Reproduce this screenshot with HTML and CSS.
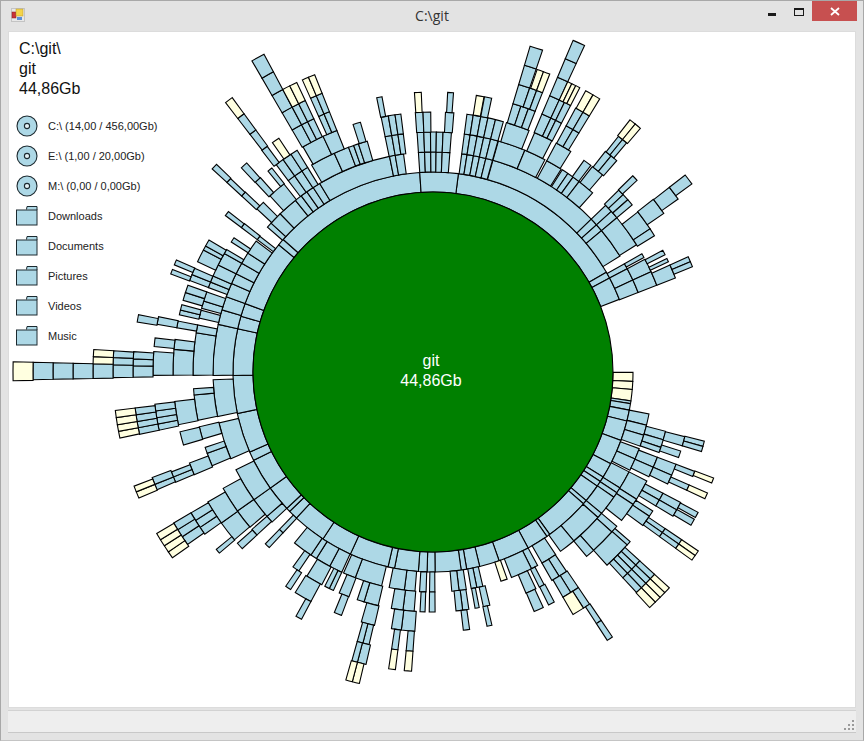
FILE: index.html
```html
<!DOCTYPE html>
<html lang="en">
<head>
    <meta charset="UTF-8">
    <title>C:\git</title>
    <link rel="stylesheet" href="styles.css">
</head>
<body>
    <div class="window">
        <div class="titlebar">
            <svg class="app-icon" width="14" height="14" viewBox="0 0 14 14">
                <rect x="0.5" y="0.5" width="13" height="13" fill="#e8e8e8" stroke="#c4c4c4"/>
                <rect x="1" y="4" width="4" height="6" fill="#c8323a" stroke="#8a2020" stroke-width="0.5"/>
                <rect x="5" y="1" width="7" height="7" fill="#f4d44a" stroke="#b8962a" stroke-width="0.5"/>
                <rect x="6" y="9" width="5" height="3" fill="#5c8fd6"/>
            </svg>
            <span class="title">C:\git</span>
            <div class="controls">
                <span class="btn-min"></span>
                <span class="btn-max"></span>
                <span class="btn-close">
                    <svg width="10" height="9" viewBox="0 0 10 9">
                        <path d="M1 1 L9 8 M9 1 L1 8" stroke="#fff" stroke-width="1.8" fill="none"/>
                    </svg>
                </span>
            </div>
        </div>

        <div class="panel">
            <svg id="sunburst" class="sunburst"></svg>

            <div class="info">
                <div>C:\git\</div>
                <div>git</div>
                <div>44,86Gb</div>
            </div>

            <ul class="places">
                <li><svg class="ico" viewBox="0 0 22 22"><use href="#disc"/></svg>C:\ (14,00 / 456,00Gb)</li>
                <li><svg class="ico" viewBox="0 0 22 22"><use href="#disc"/></svg>E:\ (1,00 / 20,00Gb)</li>
                <li><svg class="ico" viewBox="0 0 22 22"><use href="#disc"/></svg>M:\ (0,00 / 0,00Gb)</li>
                <li><svg class="ico" viewBox="0 0 22 22"><use href="#folder"/></svg>Downloads</li>
                <li><svg class="ico" viewBox="0 0 22 22"><use href="#folder"/></svg>Documents</li>
                <li><svg class="ico" viewBox="0 0 22 22"><use href="#folder"/></svg>Pictures</li>
                <li><svg class="ico" viewBox="0 0 22 22"><use href="#folder"/></svg>Videos</li>
                <li><svg class="ico" viewBox="0 0 22 22"><use href="#folder"/></svg>Music</li>
            </ul>
        </div>

        <div class="statusbar">
            <svg width="12" height="12" viewBox="0 0 12 12">
                <path d="M9 1h2v2H9zM5 5h2v2H5zM9 5h2v2H9zM1 9h2v2H1zM5 9h2v2H5zM9 9h2v2H9z" fill="#9a9a9a"/>
            </svg>
        </div>
    </div>

    <svg class="defs" width="0" height="0">
        <defs>
            <g id="disc">
                <circle cx="11" cy="11" r="10" fill="lightblue" stroke="#1c2a30" stroke-width="1.1"/>
                <circle cx="11" cy="11" r="2.6" fill="#e4f2f6" stroke="#1c2a30" stroke-width="1.1"/>
            </g>
            <g id="folder">
                <path d="M10.5 4.5 L11 1.5 H21 V5" fill="lightblue" stroke="#1c2a30"/>
                <rect x="0.5" y="5" width="20.5" height="15" fill="lightblue" stroke="#1c2a30"/>
            </g>
        </defs>
    </svg>

    <script src="sunburst.js"></script>
</body>
</html>
```

FILE: styles.css
```css
* {
    box-sizing: border-box;
}
body {
    margin: 0;
    background: #e3e3e3;
    font-family: "Liberation Sans", Arial, sans-serif;
}
.window {
    width: 864px;
    height: 741px;
    display: flex;
    flex-direction: column;
    border: 1px solid #a8a8a8;
    border-bottom-color: #c4c4c4;
    background: #e3e3e3;
}
.titlebar {
    height: 30px;
    flex: none;
    position: relative;
    display: flex;
    align-items: center;
    justify-content: center;
}
.app-icon {
    position: absolute;
    left: 10px;
    top: 7px;
}
.title {
    font-family: "Open Sans", sans-serif;
    font-size: 14px;
    color: #333;
    margin-bottom: 1px;
}
.controls {
    position: absolute;
    right: 6px;
    top: 0;
    display: flex;
}
.btn-min {
    width: 8px;
    height: 3px;
    background: #1a1a1a;
    margin: 12px 18px 0 0;
}
.btn-max {
    width: 10px;
    height: 8px;
    border: 1px solid #1a1a1a;
    border-top-width: 2px;
    margin: 7px 8px 0 0;
}
.btn-close {
    width: 45px;
    height: 20px;
    background: #c75050;
    display: flex;
    align-items: center;
    justify-content: center;
}
.panel {
    flex: 1;
    position: relative;
    margin: 0 7px 0 7px;
    border: 1px solid #dcdcdc;
    background: #fff;
    padding: 7px 0 0 9px;
    overflow: hidden;
}
.sunburst {
    position: absolute;
    left: 0;
    top: 0;
    width: 100%;
    height: 100%;
}
.cell {
    fill: lightblue;
    stroke: #000;
    stroke-width: 1.1;
}
.cell-file {
    fill: lightyellow;
}
.core {
    fill: green;
    stroke: #000;
    stroke-width: 1.1;
}
.core-label {
    fill: #fff;
    font-size: 16px;
    text-anchor: middle;
}
.info {
    position: relative;
    width: 110px;
    font-size: 16px;
    line-height: 20px;
    color: #111;
    margin-left: 1px;
}
.places {
    position: relative;
    width: 150px;
    list-style: none;
    margin: 12px 0 0 -2px;
    padding: 0;
}
.places li {
    height: 30px;
    display: flex;
    align-items: center;
    font-size: 11px;
    color: #222;
    white-space: nowrap;
}
.ico {
    width: 22px;
    height: 22px;
    flex: none;
    margin-right: 10px;
}
.statusbar {
    height: 23px;
    flex: none;
    margin: 2px 7px 7px 7px;
    background: #eeeeee;
    border-top: 1px solid #d2d2d2;
    border-bottom: 1px solid #c8c8c8;
    display: flex;
    justify-content: flex-end;
    align-items: flex-end;
    padding: 0 1px 1px 0;
}
.defs {
    position: absolute;
}
```

FILE: sunburst.js
```js
// sunburst of the folder tree: angles in degrees, clockwise from 12 o'clock
var CX = 424, CY = 340, R0 = 180, STEP = 20;
var Y = 1;

// [first ring, last ring, cell boundaries, is a file]
var cells = [
    // ring 1
    [1, 1, [7.3, 60.1, 62, 68.7]],
    [1, 1, [90.1, 92.7, 95, 98.3], Y],
    [1, 1, [98.3, 99.1, 101, 104.2, 110, 117.3, 121.7, 123.2, 124.8, 130, 131.2, 144.3, 145.3, 151.6, 160.7, 166.5, 170.3, 171.9, 179.4, 181.7, 184.2, 191.1, 193, 204.4, 213.4, 223.1, 225.8, 227, 234.5, 243.8, 246.4, 258, 269, 282.5, 286.2, 290, 309.5, 311.5, 356.2, 367.3]],

    // ring 2
    [2, 2, [15.8, 46, 48, 50, 58.2]],
    [2, 2, [60.5, 62, 65.3, 68.8]],
    [2, 2, [101, 104, 106.7, 109.7]],
    [2, 2, [110.4, 113.3, 116.5]],
    [2, 2, [117, 121.8, 123.3, 124.7, 130, 131.4, 140.2, 144.6]],
    [2, 2, [146.1, 150.3]],
    [2, 2, [151.6, 153.4, 159.1]],
    [2, 2, [160.3, 162], Y],
    [2, 2, [166.9, 168.5, 170]],
    [2, 2, [171.3, 173.2, 175.1]],
    [2, 2, [179.5, 180.9]],
    [2, 2, [181.8, 183.5]],
    [2, 2, [184.7, 187.5, 191.5]],
    [2, 2, [193.5, 200.7, 204]],
    [2, 2, [204.5, 208, 212, 213.7, 219]],
    [2, 2, [223, 224.3]],
    [2, 2, [227, 229, 234.5, 243.6]],
    [2, 2, [246.8, 256.6]],
    [2, 2, [258.3, 268]],
    [2, 2, [269.1, 282.5, 286.4, 290, 293.7, 296.5, 299.6, 302.7, 306.5]],
    [2, 2, [307, 308.1]],
    [2, 2, [311.2, 312.6, 316, 321.3, 323.2, 325, 327, 329, 348.6, 350.1, 352.3]],

    // ring 3
    [3, 3, [15.8, 22.5]],
    [3, 3, [22.5, 27.8]],
    [3, 3, [28.3, 32.3]],
    [3, 3, [32.6, 34.2, 35.7, 37.5, 41.7]],
    [3, 3, [46, 48, 50, 58]],
    [3, 3, [60.5, 61.5]],
    [3, 3, [62, 65.3, 68.8]],
    [3, 3, [104.3, 106.4, 108.3, 109.6]],
    [3, 3, [110.8, 113.4, 115.9]],
    [3, 3, [117, 122, 123.5, 128.2]],
    [3, 3, [130, 131.8, 138, 140.2]],
    [3, 3, [146.2, 148.3, 150.3]],
    [3, 3, [152.4, 153.7]],
    [3, 3, [154.6, 157.2]],
    [3, 3, [166.3, 167.9]],
    [3, 3, [168.9, 169.9]],
    [3, 3, [171.4, 172.9, 174.5]],
    [3, 3, [179.5, 180.9]],
    [3, 3, [181.9, 183.1]],
    [3, 3, [184.5, 187.2, 190]],
    [3, 3, [193.2, 196.7, 198.4]],
    [3, 3, [200.5, 203]],
    [3, 3, [204.5, 205.6, 206.8]],
    [3, 3, [207.6, 211.7]],
    [3, 3, [214, 215.7]],
    [3, 3, [223, 224.3]],
    [3, 3, [227.2, 229]],
    [3, 3, [229.7, 234.6, 241]],
    [3, 3, [247, 250.2, 251.7]],
    [3, 3, [253.8, 256.8]],
    [3, 3, [258.4, 264.5, 266]],
    [3, 3, [269.2, 279.4, 281.3]],
    [3, 3, [283, 284.9]],
    [3, 3, [285.4, 287.2, 289.5]],
    [3, 3, [290.6, 292, 293.6, 296.5, 299.6, 300.7]],
    [3, 3, [302.8, 304]],
    [3, 3, [307, 308.2]],
    [3, 3, [312.8, 315]],
    [3, 3, [317.2, 321.6]],
    [3, 3, [322.9, 324.8, 326.9, 328.5]],
    [3, 3, [329.6, 335.7, 339.4, 340.7, 341.9, 344.1]],
    [3, 3, [348.5, 350.1, 351.6, 352.9]],
    [2, 3, [356.2, 357.8, 359.4, 360.8, 362.4, 364.4]],

    // ring 4
    [4, 4, [16.4, 21.7]],
    [4, 4, [23, 27.2]],
    [4, 4, [28.3, 32]],
    [4, 4, [35.5, 37.4]],
    [4, 4, [37.8, 40.7]],
    [4, 4, [45.6, 47, 48.5, 50]],
    [4, 4, [52, 56.6, 58.4]],
    [4, 4, [62.1, 63.2]],
    [4, 4, [64.1, 64.9]],
    [4, 4, [65.7, 68.8]],
    [4, 4, [104.4, 106.5]],
    [4, 4, [107.7, 109.2]],
    [4, 4, [110.8, 113.4, 115.5]],
    [4, 4, [117.8, 119.5, 121]],
    [4, 4, [122.3, 123.7, 126.2]],
    [4, 4, [130.7, 131.7, 138]],
    [4, 4, [146, 148, 150]],
    [4, 4, [152.2, 153.6]],
    [4, 4, [154.9, 157.1]],
    [4, 4, [166.9, 168]],
    [4, 4, [171.9, 173.3]],
    [4, 4, [184, 187, 189.2]],
    [4, 4, [193, 196]],
    [4, 4, [200.6, 202.3]],
    [4, 4, [208, 212]],
    [4, 4, [213.2, 214.5]],
    [4, 4, [227.2, 228.8]],
    [4, 4, [229.8, 234.5, 240]],
    [4, 4, [246.7, 249.5]],
    [4, 4, [253.7, 256.7]],
    [4, 4, [258.3, 263.5]],
    [4, 4, [269.3, 275, 277.2]],
    [4, 4, [279.8, 281.3]],
    [4, 4, [282.7, 283.8, 285]],
    [4, 4, [286, 287.8, 289.5]],
    [4, 4, [290.6, 292, 293.5]],
    [4, 4, [295.1, 298, 299, 300.5]],
    [4, 4, [307, 308.1]],
    [4, 4, [312.6, 313.8]],
    [4, 4, [316.9, 318.4]],
    [4, 4, [320.6, 321.7]],
    [4, 4, [322.9, 324.8, 326.9, 328.5]],
    [4, 4, [330, 335, 338.3]],
    [4, 4, [342.1, 343.8]],
    [4, 4, [348.5, 350.1, 351.6, 352.9]],
    [4, 4, [356.1, 357.8, 359.5]],
    [4, 4, [362.75, 364.6]],
    [2, 4, [7.5, 8.9, 10.6, 12.2, 13.9, 15.7]],

    // ring 5
    [5, 5, [8.9, 10.5], Y],
    [5, 5, [10.6, 12.1]],
    [5, 5, [16.6, 18.3, 19.9, 21.4]],
    [5, 6, [22.9, 24.9, 26, 27.3]],
    [5, 6, [28.4, 30, 31.4]],
    [5, 5, [38, 39.5, 41]],
    [5, 5, [45.5, 46.8]],
    [5, 5, [51.9, 55.5]],
    [5, 5, [65.7, 66.8, 67.9]],
    [5, 5, [104.3, 105.4, 106.5]],
    [5, 5, [110.8, 111.9]],
    [5, 5, [113.8, 115]],
    [5, 5, [117.8, 119.5, 121]],
    [5, 6, [124, 125, 126]],
    [5, 6, [132.4, 133.6, 134.8, 136, 137.3]],
    [5, 5, [146, 147.5]],
    [5, 5, [147.5, 150], Y],
    [5, 5, [184.1, 185.5]],
    [5, 5, [187.2, 188.5]],
    [5, 5, [193.2, 194.5, 195.7]],
    [5, 5, [208, 209.3]],
    [5, 5, [229.7, 230.7]],
    [5, 5, [234.6, 236.3, 238, 239.8]],
    [5, 5, [246.8, 248, 249.1]],
    [5, 5, [258, 259.3, 260.6, 262, 263.4]],
    [5, 5, [269.3, 274.2]],
    [5, 5, [275.2, 277]],
    [5, 5, [279.8, 281.4]],
    [5, 5, [290.5, 291.5]],
    [5, 5, [292.5, 293.6]],
    [5, 5, [312.6, 313.7]],
    [5, 5, [316.8, 318.3]],
    [5, 5, [322.3, 323.7]],
    [5, 5, [325, 326.6], Y],
    [5, 5, [329.8, 332, 333.4, 334.8]],
    [5, 5, [335.9, 337.1, 338.3]],
    [5, 5, [348.4, 349.5]],
    [5, 5, [356.2, 357.6], Y],
    [5, 5, [363, 364.2]],

    // ring 6
    [6, 6, [16.6, 18.8, 20.2, 21.4]],
    [6, 6, [38.2, 39.2, 40.2]],
    [6, 6, [52, 54.8]],
    [6, 6, [110.7, 111.7], Y],
    [6, 6, [113.8, 115], Y],
    [6, 6, [117.9, 119]],
    [6, 6, [119.4, 120.7]],
    [6, 6, [145.9, 147]],
    [6, 6, [184.1, 185.5], Y],
    [6, 6, [187.2, 188.5], Y],
    [6, 6, [192.9, 194.6, 195.7]],
    [6, 6, [234.9, 236.7, 238.3, 239.8]],
    [6, 6, [246.9, 248, 249.4]],
    [6, 6, [258, 259.3, 260.5, 261.8, 263.1]],
    [6, 6, [269, 271.2, 272.5, 273.9]],
    [6, 6, [279.6, 281]],
    [6, 6, [312.6, 313.8]],
    [6, 7, [322.4, 323.8]],
    [6, 6, [329.8, 332, 333.4, 334.8]],
    [6, 6, [335.9, 337.1, 338.3]],

    // ring 7 and out
    [7, 8, [16.6, 18.8]],
    [7, 7, [19, 20.2, 21.4], Y],
    [7, 9, [22.9, 24.9]],
    [7, 7, [24.9, 25.7, 26.5, 27.3], Y],
    [7, 7, [28.5, 30, 31.4], Y],
    [7, 7, [38, 39.2, 40.4], Y],
    [7, 7, [52, 54]],
    [7, 7, [124, 125, 126], Y],
    [7, 7, [132.4, 133.6, 134.8, 136, 137.4], Y],
    [7, 7, [145.9, 147]],
    [7, 7, [193.3, 194.6, 195.8], Y],
    [7, 7, [234.5, 235.8, 237.1, 238.4, 239.7], Y],
    [7, 7, [246.8, 248, 249.1], Y],
    [7, 7, [258.1, 259.3, 260.5, 261.8, 263.1], Y],
    [7, 7, [269, 271.3, 272.6, 273.8]],
    [7, 9, [329.8, 332]],
    [7, 7, [332, 333.4, 334.8], Y],
    [7, 7, [335.9, 337.1, 338.3], Y],
    [8, 11, [268.9, 271.4]],
    [8, 8, [271.4, 272.6, 273.8], Y],
    [8, 8, [322.4, 323.8], Y],
    [12, 12, [268.8, 271.4], Y]
];

function pt(r, a) {
    var t = a * Math.PI / 180;
    return (CX + r * Math.sin(t)).toFixed(2) + ' ' + (CY - r * Math.cos(t)).toFixed(2);
}

function sector(ring, a0, a1) {
    var r1 = R0 + (ring - 1) * STEP, r2 = r1 + STEP;
    return 'M' + pt(r1, a0) +
        ' L' + pt(r2, a0) +
        ' A' + r2 + ' ' + r2 + ' 0 0 1 ' + pt(r2, a1) +
        ' L' + pt(r1, a1) +
        ' A' + r1 + ' ' + r1 + ' 0 0 0 ' + pt(r1, a0) + ' Z';
}

var svg = document.getElementById('sunburst');
var NS = 'http://www.w3.org/2000/svg';

function add(tag, attrs, text) {
    var el = document.createElementNS(NS, tag);
    for (var k in attrs) el.setAttribute(k, attrs[k]);
    if (text) el.textContent = text;
    svg.appendChild(el);
}

cells.forEach(function (c) {
    for (var ring = c[0]; ring <= c[1]; ring++) {
        for (var i = 0; i < c[2].length - 1; i++) {
            add('path', {
                d: sector(ring, c[2][i], c[2][i + 1]),
                'class': c[3] ? 'cell cell-file' : 'cell'
            });
        }
    }
});

add('circle', { cx: CX, cy: CY, r: R0, 'class': 'core' });
add('text', { x: CX - 2, y: CY - 6, 'class': 'core-label' }, 'git');
add('text', { x: CX - 2, y: CY + 14, 'class': 'core-label' }, '44,86Gb');
```
